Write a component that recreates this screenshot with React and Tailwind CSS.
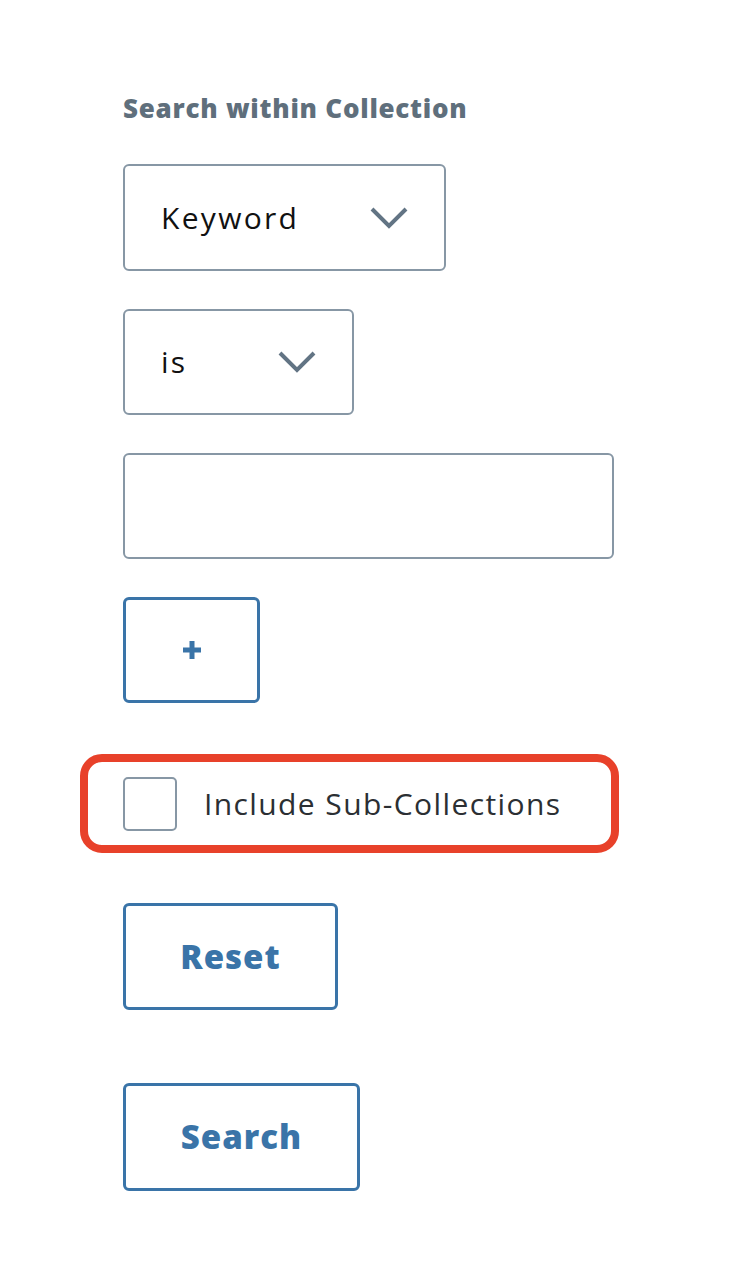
import { useState } from "react";

function Chevron() {
  return (
    <svg width="38" height="22" viewBox="0 0 38 22" fill="none" className="shrink-0">
      <polyline points="2,2 19,19 36,2" stroke="#627484" strokeWidth="4" />
    </svg>
  );
}

function SelectBox({ label, width, height }) {
  return (
    <div
      className={`flex items-center justify-between border-2 border-[#8797a5] rounded-[6px] bg-white pl-[36px] pr-[36px] ${width} ${height}`}
    >
      <span className="text-[30px] text-[#111] leading-none tracking-[2.3px]">{label}</span>
      <Chevron />
    </div>
  );
}

export default function App() {
  const [checked, setChecked] = useState(false);

  return (
    <div className="min-h-[1272px] bg-white pl-[123px] pt-[92px] font-['Open_Sans',sans-serif]">
      <h2 className="text-[26px] font-extrabold text-[#5f6f7c] leading-[32px] tracking-[0.75px]">
        Search within Collection
      </h2>

      <div className="mt-[40px] flex flex-col gap-[38px]">
        <SelectBox label="Keyword" width="w-[323px]" height="h-[107px]" />
        <SelectBox label="is" width="w-[231px]" height="h-[106px]" />
        <input
          type="text"
          className="w-[491px] h-[106px] border-2 border-[#8797a5] rounded-[6px] outline-none px-4 text-[30px]"
        />
        <button className="w-[137px] h-[106px] border-[3px] border-[#3a74a8] rounded-[6px] flex items-center justify-center">
          <svg width="18" height="18" viewBox="0 0 18 18">
            <rect x="6.5" y="0" width="5" height="18" fill="#3a74a8" />
            <rect x="0" y="6.5" width="18" height="5" fill="#3a74a8" />
          </svg>
        </button>
      </div>

      {/* highlighted row */}
      <div className="relative mt-[74px] w-[454px]">
        <div className="absolute -left-[43px] -top-[23px] w-[539px] h-[99px] border-[8px] border-[#e8412a] rounded-[22px] pointer-events-none" />
        <label className="flex items-center gap-[27px] h-[53px] cursor-pointer">
          <span
            onClick={() => setChecked(!checked)}
            className="w-[54px] h-[54px] border-2 border-[#8797a5] rounded-[5px] bg-white shrink-0"
          />
          <span className="text-[30px] text-[#2b2f33] leading-none tracking-[1.4px]">
            Include Sub-Collections
          </span>
        </label>
      </div>

      <div className="mt-[73px] flex flex-col items-start gap-[73px]">
        <button className="w-[215px] h-[107px] border-[3px] border-[#3a74a8] rounded-[6px] text-[33px] font-extrabold text-[#3a74a8] tracking-[1px]">
          Reset
        </button>
        <button className="w-[237px] h-[108px] border-[3px] border-[#3a74a8] rounded-[6px] text-[33px] font-extrabold text-[#3a74a8] tracking-[1px]">
          Search
        </button>
      </div>
    </div>
  );
}
